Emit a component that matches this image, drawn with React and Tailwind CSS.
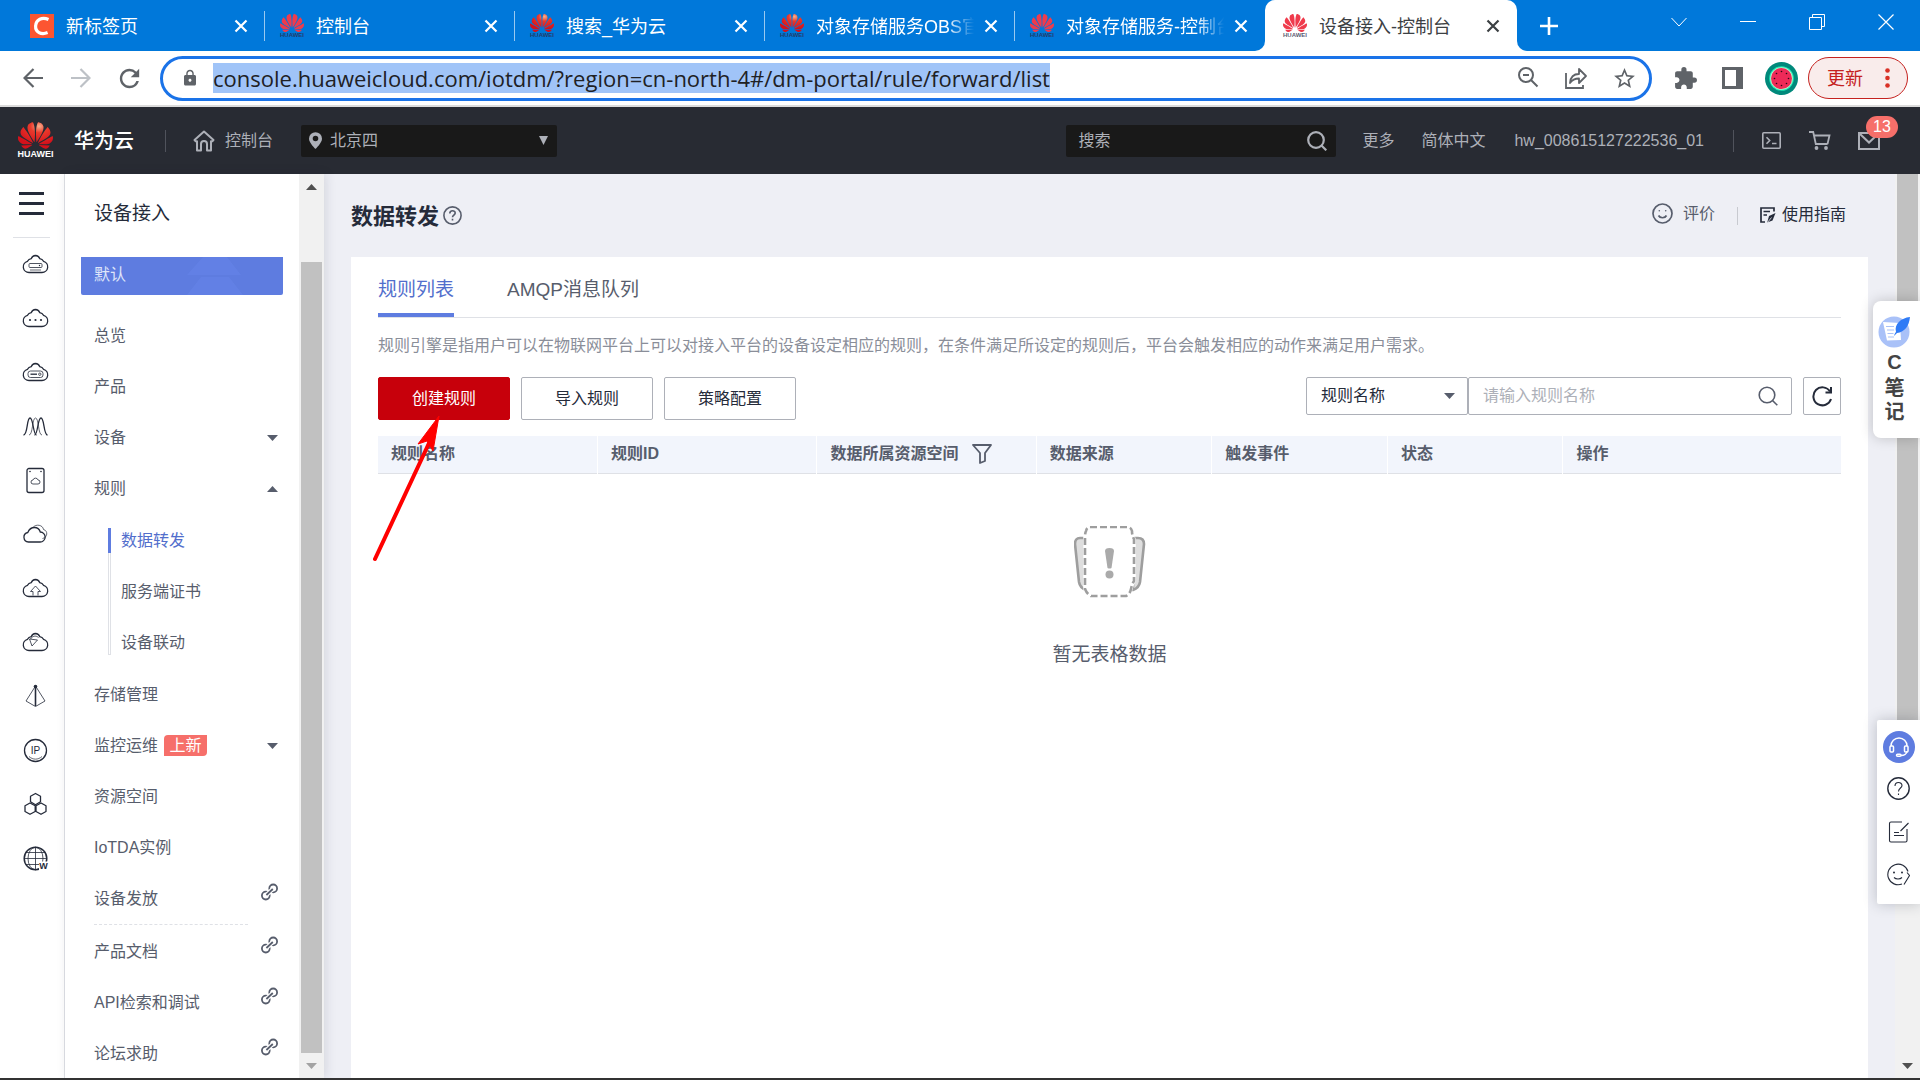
import { useState } from 'react';
import { SiHuawei } from 'react-icons/si';
import { MdExtension, MdStarBorder, MdLock, MdRefresh } from 'react-icons/md';

const browserTabs = [
  { title: '新标签页', icon: 'csdn' },
  { title: '控制台', icon: 'huawei' },
  { title: '搜索_华为云', icon: 'huawei-dark' },
  { title: '对象存储服务OBS官', icon: 'huawei-dark' },
  { title: '对象存储服务-控制台', icon: 'huawei' },
];

const menuTop = [
  { label: '总览' },
  { label: '产品' },
  { label: '设备', caret: 'down' },
  { label: '规则', caret: 'up' },
];

const ruleMenu = ['数据转发', '服务端证书', '设备联动'];

const menuBottom = [
  { label: '存储管理' },
  { label: '监控运维', caret: 'down', isNew: true },
  { label: '资源空间' },
  { label: 'IoTDA实例' },
  { label: '设备发放', external: true },
];

const menuLinks = [
  { label: '产品文档', external: true },
  { label: 'API检索和调试', external: true },
  { label: '论坛求助', external: true },
];

const columns = [
  { label: '规则名称', width: 'w-[15%]' },
  { label: '规则ID', width: 'w-[15%]' },
  { label: '数据所属资源空间', width: 'w-[15%]', filter: true },
  { label: '数据来源', width: 'w-[12%]' },
  { label: '触发事件', width: 'w-[12%]' },
  { label: '状态', width: 'w-[12%]' },
  { label: '操作', width: 'w-[19%]' },
];

/* ---------- small icons ---------- */

function Caret({ up = false, className = 'text-[#575d6c]' }) {
  return (
    <svg width="11" height="6" viewBox="0 0 11 6" className={className} fill="currentColor">
      {up ? <path d="M5.5 0L11 6H0z" /> : <path d="M0 0h11L5.5 6z" />}
    </svg>
  );
}

function CloseIcon() {
  return (
    <svg width="14" height="14" viewBox="0 0 14 14" fill="none" stroke="currentColor" strokeWidth="2.2">
      <path d="M1.5 1.5l11 11M12.5 1.5l-11 11" />
    </svg>
  );
}

function ChainIcon() {
  return (
    <svg width="18" height="18" viewBox="0 0 18 18" fill="none" stroke="#575d6c" strokeWidth="1.8">
      <circle cx="5.8" cy="12.6" r="3.9" />
      <circle cx="13.2" cy="5.4" r="3.9" />
      <path d="M6.4 12l6.4-6" stroke="#fff" strokeWidth="4.4" />
      <path d="M6.4 12l6.4-6" />
    </svg>
  );
}

function SearchIcon({ size = 20, width = 2 }) {
  return (
    <svg width={size} height={size} viewBox="0 0 20 20" fill="none" stroke="currentColor" strokeWidth={width}>
      <circle cx="9" cy="9" r="7.8" />
      <path d="M14.5 14.5l4.8 4.8" />
    </svg>
  );
}

function HuaweiMark({ dark = false }) {
  return (
    <span className="flex w-6 shrink-0 flex-col items-center">
      <SiHuawei
        viewBox="0 3 24 18"
        className="h-[18px] w-6"
        style={{ fill: dark ? 'url(#hw-petal)' : '#ef3b4c' }}
      />
      <span className="text-[6px] leading-[6px] font-bold text-[#2b2b4a]/80">HUAWEI</span>
    </span>
  );
}

function Favicon({ type }) {
  if (type === 'csdn') {
    return (
      <svg width="24" height="24" viewBox="0 0 24 24" className="shrink-0">
        <rect width="24" height="24" fill="#fc5531" />
        <path d="M18.5 5.5C12 2.6 6 5.5 5.6 12c-.3 6 5.4 9.2 12 6.6" fill="none" stroke="#fff" strokeWidth="3.2" />
      </svg>
    );
  }
  return <HuaweiMark dark={type === 'huawei-dark'} />;
}

/* ---------- browser frame ---------- */

function TabStrip() {
  return (
    <div className="flex h-[51px] shrink-0 bg-[#0078da] pl-[15px] text-lg text-white">
      {browserTabs.map((tab, i) => (
        <div key={tab.title} className="flex w-[250px] items-center pl-[15px]">
          <Favicon type={tab.icon} />
          <span
            className={`ml-3 flex-1 overflow-hidden pt-0.5 whitespace-nowrap ${
              i > 2 ? 'mask-r-from-80% mask-r-to-97%' : ''
            }`}
          >
            {tab.title}
          </span>
          <button aria-label="关闭标签页" className="ml-1 flex w-4 justify-center">
            <CloseIcon />
          </button>
          <span className={`ml-[15px] h-[30px] w-px ${i < 4 ? 'bg-white/60' : ''}`} />
        </div>
      ))}

      {/* Active tab, the two spans draw the outward curves at its foot */}
      <div className="relative flex w-[252px] items-center rounded-t-[10px] bg-white pl-[18px] text-[#3c4043]">
        <span className="absolute bottom-0 -left-2.5 h-2.5 w-2.5 bg-white">
          <span className="block h-full w-full rounded-br-[10px] bg-[#0078da]" />
        </span>
        <span className="absolute -right-2.5 bottom-0 h-2.5 w-2.5 bg-white">
          <span className="block h-full w-full rounded-bl-[10px] bg-[#0078da]" />
        </span>
        <HuaweiMark />
        <span className="ml-3 flex-1 pt-0.5 whitespace-nowrap">设备接入-控制台</span>
        <button aria-label="关闭标签页" className="mr-4 flex w-4 justify-center">
          <CloseIcon />
        </button>
      </div>

      <button aria-label="新建标签页" className="ml-5 flex w-6 items-center justify-center">
        <svg width="18" height="18" viewBox="0 0 18 18" stroke="currentColor" strokeWidth="2.6">
          <path d="M9 0v18M0 9h18" />
        </svg>
      </button>

      <div className="ml-auto flex h-[43px] items-center">
        <button aria-label="搜索标签页" className="flex w-[69px] justify-center">
          <svg width="16" height="10" viewBox="0 0 16 10" fill="none" stroke="currentColor">
            <path d="M.5 1L8 9l7.5-8" />
          </svg>
        </button>
        <button aria-label="最小化" className="flex w-[69px] justify-center">
          <span className="h-px w-4 bg-white" />
        </button>
        <button aria-label="还原" className="flex w-[69px] justify-center">
          <svg width="16" height="16" viewBox="0 0 16 16" fill="none" stroke="currentColor">
            <path d="M.5 3.5h12v12H.5zM3.5 3.5v-3h12v12h-3" />
          </svg>
        </button>
        <button aria-label="关闭" className="flex w-[69px] justify-center">
          <svg width="16" height="16" viewBox="0 0 16 16" fill="none" stroke="currentColor" strokeWidth="1.2">
            <path d="M.5.5l15 15M15.5.5l-15 15" />
          </svg>
        </button>
      </div>
    </div>
  );
}

function AddressRow() {
  return (
    <div className="flex h-14 shrink-0 items-center border-b-2 border-[#dcdcdc] bg-white pr-3 pl-[9px] text-[#5f6368]">
      <button aria-label="后退" className="flex w-12 justify-center">
        <svg width="20" height="20" viewBox="0 0 20 20" fill="none" stroke="currentColor" strokeWidth="2.2">
          <path d="M20 10H2M10.5 1l-9 9 9 9" />
        </svg>
      </button>
      <button aria-label="前进" className="flex w-12 justify-center text-[#bdc1c6]">
        <svg width="20" height="20" viewBox="0 0 20 20" fill="none" stroke="currentColor" strokeWidth="2.2">
          <path d="M0 10h18M9.5 1l9 9-9 9" />
        </svg>
      </button>
      <button aria-label="重新加载" className="flex w-12 justify-center">
        <MdRefresh size={29} />
      </button>

      <div className="ml-[7px] flex h-[45px] flex-1 items-center rounded-full border-3 border-[#1a73e8] pl-[18px]">
        <MdLock size={18} />
        <input
          aria-label="地址栏"
          className="ml-3.5 field-sizing-content h-[30px] bg-[#a0c4f8] font-['Open_Sans',sans-serif] text-[22px] text-[#202124] outline-none"
          defaultValue="console.huaweicloud.com/iotdm/?region=cn-north-4#/dm-portal/rule/forward/list"
        />
        <div className="mr-px ml-auto flex">
          <button aria-label="缩放" className="flex w-12 justify-center">
            <svg width="22" height="22" viewBox="0 0 22 22" fill="none" stroke="currentColor" strokeWidth="2">
              <circle cx="9" cy="9" r="7" />
              <path d="M14 14l6.5 6.5M6 9h6" />
            </svg>
          </button>
          <button aria-label="分享" className="flex w-12 justify-center">
            <svg width="24" height="24" viewBox="0 0 24 24" fill="none" stroke="currentColor" strokeWidth="1.8">
              <path d="M2 7v15h17v-3" />
              <path d="M6 17c.5-6 4-9 9-9V3l7 7-7 7v-4.5c-4 0-7 1.500-9 4.500z" strokeLinejoin="round" />
            </svg>
          </button>
          <button aria-label="收藏" className="flex w-12 justify-center">
            <MdStarBorder size={25} />
          </button>
        </div>
      </div>

      <button aria-label="扩展程序" className="ml-[9px] flex w-12 justify-center">
        <MdExtension size={25} />
      </button>
      <button aria-label="侧边栏" className="flex w-12 justify-center">
        <svg width="22" height="22" viewBox="0 0 22 22" fill="currentColor">
          <path d="M0 0h21v22H0zM3 3v16h11V3z" fillRule="evenodd" />
        </svg>
      </button>
      <button aria-label="个人资料" className="flex w-12 justify-center">
        <svg width="33" height="33" viewBox="0 0 33 33">
          <circle cx="16.5" cy="16.5" r="16.5" fill="#00897b" />
          <circle cx="16.5" cy="16.5" r="12.3" fill="#1de9b6" />
          <circle cx="16.5" cy="16.5" r="11.3" fill="#b9f6ca" />
          <circle cx="16.5" cy="16.5" r="10.5" fill="#ee2a58" />
          <g fill="#2b0a14">
            <circle cx="16.5" cy="9.5" r=".8" />
            <circle cx="16.5" cy="23.5" r=".8" />
            <circle cx="9.5" cy="16.5" r=".8" />
            <circle cx="23.5" cy="16.5" r=".8" />
            <circle cx="11.5" cy="11.5" r=".8" />
            <circle cx="21.5" cy="11.5" r=".8" />
            <circle cx="11.5" cy="21.5" r=".8" />
            <circle cx="21.5" cy="21.5" r=".8" />
          </g>
        </svg>
      </button>
      <button className="ml-[3px] flex h-[42px] w-[100px] items-center rounded-full border border-[#c5221f] bg-[#f9eceb] pl-[18px] text-lg text-[#c5221f]">
        <span className="pt-0.5">更新</span>
        <svg width="5" height="24" viewBox="0 0 5 24" fill="#d93025" className="ml-[22px]">
          <circle cx="2.5" cy="4.5" r="2.3" />
          <circle cx="2.5" cy="12" r="2.3" />
          <circle cx="2.5" cy="19.5" r="2.3" />
        </svg>
      </button>
    </div>
  );
}

/* ---------- console header ---------- */

function ConsoleHeader() {
  return (
    <header className="flex h-[67px] shrink-0 items-center bg-[#282b33] pr-10 pl-[18px] text-base text-[#adb0b8]">
      <a href="#home" className="flex items-center text-white">
        <span className="flex w-[35px] flex-col items-center">
          <SiHuawei viewBox="0 3 24 18" className="h-[27px] w-[35px]" style={{ fill: 'url(#hw-petal)' }} />
          <span className="mt-px text-[9px] leading-[9px] font-bold">HUAWEI</span>
        </span>
        <span className="ml-[21px] text-xl font-medium">华为云</span>
      </a>
      <span className="ml-[31px] h-[22px] w-px bg-[#50535c]" />
      <a href="#console" className="ml-[27px] flex items-center">
        <svg width="22" height="22" viewBox="0 0 22 22" fill="none" stroke="currentColor" strokeWidth="2" strokeLinejoin="round">
          <path d="M11 1.5L1.5 10l1.2 1.2H4v9.3h4V14a3 3 0 016 0v6.5h4v-9.3h1.3l1.2-1.2z" />
        </svg>
        <span className="ml-2.5">控制台</span>
      </a>
      <div className="relative ml-7 flex h-8 w-64 items-center rounded-xs bg-[#191919] pl-2">
        <svg width="13" height="17" viewBox="0 0 14 18" fill="currentColor">
          <path fillRule="evenodd" d="M7 0a7 7 0 00-7 7c0 4.500 7 11 7 11s7-6.500 7-11a7 7 0 00-7-7zm0 3.800a3 3 0 110 6 3 3 0 010-6z" />
        </svg>
        <select aria-label="区域" className="ml-2 flex-1 appearance-none bg-transparent outline-none">
          <option>北京四</option>
        </select>
        <svg width="9" height="9" viewBox="0 0 10 10" fill="currentColor" className="pointer-events-none absolute right-[9px]">
          <path d="M0 0h10L5 10z" />
        </svg>
      </div>

      <div className="ml-auto flex h-8 w-[270px] items-center rounded-xs bg-[#191919] pr-[9px] pl-3">
        <input aria-label="搜索" placeholder="搜索" className="min-w-0 flex-1 bg-transparent outline-none placeholder:text-[#adb0b8]" />
        <SearchIcon width={2.2} />
      </div>
      <a href="#more" className="ml-[26px]">更多</a>
      <a href="#lang" className="ml-[27px]">简体中文</a>
      <a href="#account" className="ml-[29px]">hw_008615127222536_01</a>
      <span className="ml-[29px] h-[22px] w-px bg-[#50535c]" />
      <button aria-label="CloudShell" className="ml-7">
        <svg width="19" height="17" viewBox="0 0 19 17" fill="none" stroke="currentColor" strokeWidth="1.6">
          <rect x=".8" y=".8" width="17.4" height="15.4" rx="1" />
          <path d="M4.5 5.2l3.2 3.3-3.2 3.3M10 11.5h4.5" />
        </svg>
      </button>
      <button aria-label="购物车" className="ml-7">
        <svg width="22" height="19" viewBox="0 0 22 19" fill="none" stroke="currentColor" strokeWidth="1.8">
          <path d="M0 1h4.2l2.6 12h11.700M5 4.500h15.500L18.500 13" />
          <circle cx="7.5" cy="17" r="1" fill="currentColor" />
          <circle cx="17" cy="17" r="1" fill="currentColor" />
        </svg>
      </button>
      <button aria-label="消息" className="relative ml-[27px]">
        <svg width="22" height="18" viewBox="0 0 22 18" fill="none" stroke="currentColor" strokeWidth="2">
          <path d="M1 1h20v16H1zM1.5 1.5l9.500 9 9.500-9" />
        </svg>
        <span className="absolute -top-4 left-2 h-[22px] w-8 rounded-full bg-[#f66f6a] text-center leading-[22px] text-white">
          13
        </span>
      </button>
    </header>
  );
}

/* ---------- left rail ---------- */

const cloud = 'M8 22.500a5.700 5.700 0 01-1.500-11.200 4.500 4.500 0 013.800-2.700A4.800 4.800 0 0114.500 5.500a4.800 4.800 0 014.200 3.100 4.500 4.500 0 013.800 2.700A5.700 5.700 0 0121 22.500z';

const railIcons = [
  <><path d={cloud} /><rect x="8" y="13.5" width="13" height="4" rx="1" strokeWidth=".8" /><path d="M9 20h11" strokeWidth=".7" /><circle cx="18.5" cy="15.5" r=".7" fill="currentColor" stroke="none" /></>,
  <><path d={cloud} /><g fill="currentColor" stroke="none"><circle cx="9" cy="16" r="1.1" /><circle cx="14.5" cy="16" r="1.1" /><circle cx="20" cy="16" r="1.1" /></g></>,
  <><path d={cloud} /><rect x="7" y="13" width="15" height="6.5" rx="2.5" strokeWidth=".8" /><path d="M9.5 16.2H16" /><circle cx="18.8" cy="16.2" r="1.2" strokeWidth=".8" /></>,
  <><path d="M2.5 23C7 23 5.500 6 9 6s3 17 6.500 17" /><path d="M8 23c4 0 3-17 6.500-17S17 23 21 23" strokeWidth=".7" /><path d="M13.500 23C17 23 16.500 6 20 6s2.500 17 6.500 17" /></>,
  <><rect x="6" y="2.5" width="17" height="24" rx="2" /><path d="M12 18a2 2 0 010-4 2.600 2.600 0 015 0 2 2 0 010 4z" strokeWidth=".8" /><g fill="currentColor" stroke="none"><circle cx="9" cy="5.5" r=".8" /><circle cx="20" cy="5.5" r=".8" /></g></>,
  <><path d="M7.500 22a4.800 4.800 0 01-.7-9.500C8 9.500 10 7.500 13.500 7.500s5 2 5.800 4.500A5 5 0 0119 22z" /><path d="M12 7.500C15 3.500 22 5 22.500 9.500c4.500 1 4.500 8-1 9" strokeWidth=".7" /></>,
  <><path d={cloud} /><path d="M12 21.500v-4H9.500l5-5.500 5 5.500H17v4" strokeWidth=".8" /></>,
  <><path d={cloud} /><path d="M8.500 11l8 1-5.500 6zM9.500 11c2-3 5-4 8-1.500" strokeWidth=".8" /></>,
  <><path d="M14.500 4L5 19l9.500 5.500L24 19z" strokeWidth=".8" /><path d="M14.500 4v20" strokeWidth="1.6" /><circle cx="14.5" cy="4.5" r="1.8" fill="currentColor" stroke="none" /></>,
  <><circle cx="14.5" cy="14.5" r="11" /><path d="M8 20.500c4 3.500 9 3.500 13 0" strokeWidth=".7" /><text x="14.5" y="18" fontSize="10" textAnchor="middle" fill="currentColor" stroke="none">IP</text></>,
  <><path d="M14.500 3.500l5 2.800v5.500l-5 2.900-5-2.900V6.300z" strokeLinejoin="round" /><path d="M9 13l5.200 2.800v5.700L9 24.300l-5-2.800v-5.700zM20 13l5 2.800v5.700l-5 2.800-5-2.800v-5.700z" strokeLinejoin="round" /></>,
  <><circle cx="14.5" cy="14.5" r="11.3" strokeWidth="1.5" /><path d="M14.500 3v23M3 14.500h23M5 8.500h19M5 20.500h13" strokeWidth=".8" /><ellipse cx="14.5" cy="14.5" rx="7.5" ry="11.3" strokeWidth=".8" /><rect x="18" y="17.5" width="10" height="9" fill="#fff" stroke="none" /><text x="22.5" y="25" fontSize="9" fontWeight="bold" textAnchor="middle" fill="currentColor" stroke="none">W</text></>,
];

function Rail() {
  return (
    <div className="flex w-[65px] shrink-0 flex-col border-r border-[#dfe1e6] bg-white">
      <button aria-label="服务列表" className="mt-[18px] ml-[19px] flex w-[25px] flex-col gap-[7px]">
        <span className="h-[3px] w-full bg-[#252b3a]" />
        <span className="h-[3px] w-full bg-[#252b3a]" />
        <span className="h-[3px] w-full bg-[#252b3a]" />
      </button>
      <span className="mt-[22px] ml-[13px] h-px w-[37px] bg-[#dfe1e6]" />
      <div className="flex flex-col pl-[7px]">
        {railIcons.map((shapes, i) => (
          <a key={i} href="#service" aria-label="服务" className="flex h-[54px] items-center justify-center pb-0.5 text-[#252b3a]">
            <svg width="29" height="29" viewBox="0 0 29 29" fill="none" stroke="currentColor" strokeWidth="1.3">
              {shapes}
            </svg>
          </a>
        ))}
      </div>
    </div>
  );
}

/* ---------- sidebar ---------- */

function MenuRow({ item }) {
  return (
    <a href="#menu" className="flex h-[51px] items-center pr-[21px] pl-[29px]">
      {item.label}
      {item.isNew && (
        <span className="ml-1.5 h-[21px] w-[43px] rounded-tl-sm rounded-br-sm bg-[#f66f6a] text-center leading-[21px] text-white">
          上新
        </span>
      )}
      {item.caret && (
        <span className="ml-auto">
          <Caret up={item.caret === 'up'} />
        </span>
      )}
      {item.external && (
        <span className="mb-3.5 ml-auto">
          <ChainIcon />
        </span>
      )}
    </a>
  );
}

function ScrollArrow({ up = false, className }) {
  return (
    <span className="flex h-[25px] w-full shrink-0 items-center justify-center">
      <Caret up={up} className={className} />
    </span>
  );
}

function Sidebar() {
  return (
    <aside className="flex w-[259px] shrink-0 bg-white shadow-[2px_0_10px_rgba(37,43,58,0.12)]">
      <nav className="flex-1 text-base text-[#575d6c]">
        <h2 className="flex h-[83px] items-center pb-0.5 pl-[29px] text-[19px] text-[#252b3a]">设备接入</h2>
        <div className="mx-4 flex h-[38px] items-center overflow-hidden rounded-b-xs bg-[#5e7ce0] text-[#dfe5f9]">
          <span className="w-[106px] pb-0.5 pl-[13px]">默认</span>
          <svg width="56" height="38" viewBox="0 0 56 38" fill="#6f8df0" opacity=".3">
            <path d="M16 0h24l14 18H0zM14 20h28l14 18H0z" />
            <path d="M28 1l12 17H16z" />
          </svg>
        </div>
        <div className="mt-[15px]">
          {menuTop.map((item) => (
            <MenuRow key={item.label} item={item} />
          ))}
          <div className="relative py-px">
            {/* Guide line next to the nested items */}
            <span className="absolute top-3.5 bottom-3.5 left-[43px] w-[3px] border border-[#dfe1e6]" />
            <span className="absolute top-3.5 left-[43px] h-[25px] w-[3px] bg-[#5e7ce0]" />
            {ruleMenu.map((label, i) => (
              <a
                key={label}
                href="#rule"
                className={`flex h-[51px] items-center pl-14 ${i === 0 ? 'text-[#526ecc]' : ''}`}
              >
                {label}
              </a>
            ))}
          </div>
          {menuBottom.map((item) => (
            <MenuRow key={item.label} item={item} />
          ))}
          <div className="mr-[51px] mb-px ml-[29px] border-t border-dashed border-[#dfe1e6]" />
          {menuLinks.map((item) => (
            <MenuRow key={item.label} item={item} />
          ))}
        </div>
      </nav>
      <div className="flex w-[25px] flex-col items-center bg-[#f1f1f1]">
        <ScrollArrow up className="text-[#505050]" />
        <span className="mt-[63px] w-[21px] flex-1 bg-[#c1c1c1]" />
        <ScrollArrow className="text-[#a3a3a3]" />
      </div>
    </aside>
  );
}

/* ---------- main content ---------- */

function EmptyIcon() {
  return (
    <svg width="72" height="72" viewBox="1 1 72 72" fill="none" stroke="#9e9e9e" strokeWidth="2.6">
      <path d="M12 13H7q-5 0-5 6l4 38q1 6 7 8zM60 13h5q6 0 6 6l-4 38q-1 6-7 8z" fill="#dedede" strokeLinejoin="round" />
      <path d="M17 2h37q4 0 5 4 0 5 2 8v42q-2 3-3 8-1 5-5 7H18q-4-2-6-7V12q0-4 1-6 1-4 4-4z" fill="#fff" stroke="#fff" strokeWidth="3.5" />
      <path d="M17 2h37q4 0 5 4 0 5 2 8v42q-2 3-3 8-1 5-5 7H18q-4-2-6-7V12q0-4 1-6 1-4 4-4z" fill="#fff" strokeDasharray="7 3" />
      <g fill="#aaa" stroke="none">
        <path d="M32 26q0-3 4.500-3t4.500 3l-2.500 17q-2 1-4 0z" />
        <circle cx="36.5" cy="49.5" r="4" />
      </g>
    </svg>
  );
}

function RuleTable() {
  return (
    <table className="mt-4 w-full table-fixed text-left text-base text-[#575d6c]">
      <thead>
        <tr className="h-[37px] border-b border-[#dfe1e6] bg-[#f2f5fc]">
          {columns.map((col) => (
            <th key={col.label} className={`border-r border-white pl-[13px] font-bold last:border-r-0 ${col.width}`}>
              <span className="flex items-center whitespace-nowrap">
                {col.label}
                {col.filter && (
                  <svg width="20" height="20" viewBox="0 0 20 20" fill="none" stroke="currentColor" strokeWidth="1.8" strokeLinejoin="round" className="ml-3.5">
                    <path d="M1 1h18l-6 8v8l-5 2V9z" />
                  </svg>
                )}
              </span>
            </th>
          ))}
        </tr>
      </thead>
      <tbody>
        <tr>
          <td colSpan={columns.length} className="pt-[52px]">
            <div className="flex flex-col items-center">
              <EmptyIcon />
              <p className="mt-[43px] text-[19px] leading-7">暂无表格数据</p>
            </div>
          </td>
        </tr>
      </tbody>
    </table>
  );
}

function Content() {
  const [activeTab, setActiveTab] = useState('list');
  const tabClass = 'h-full border-b-4 pt-2.5 text-[19px]';
  const buttonClass = 'h-[43px] w-[132px] rounded-xs border text-base';

  return (
    <main className="flex flex-1 flex-col px-[27px]">
      <div className="flex h-[83px] shrink-0 items-center pr-[22px]">
        <h1 className="pt-0.5 text-[22px] font-bold text-[#252b3a]">数据转发</h1>
        <button aria-label="帮助" className="ml-1">
          <svg width="19" height="19" viewBox="0 0 19 19" fill="none" stroke="#575d6c" strokeWidth="1.6">
            <circle cx="9.5" cy="9.5" r="8.6" />
            <path d="M6.800 7.500c0-3.800 5.600-3.500 5.400-.3-.2 1.800-2.700 2-2.700 4M9.500 12.800v1.800" />
          </svg>
        </button>
        <a href="#rate" className="ml-auto flex items-center pb-1 text-base text-[#575d6c]">
          <svg width="21" height="21" viewBox="0 0 21 21" fill="none" stroke="currentColor" strokeWidth="1.7">
            <circle cx="10.5" cy="10.5" r="9.5" />
            <path d="M6.500 12.500c1.500 3 6.500 3 8 0" />
            <circle cx="7.3" cy="7.8" r=".8" fill="currentColor" stroke="none" />
            <circle cx="13.7" cy="7.8" r=".8" fill="currentColor" stroke="none" />
          </svg>
          <span className="ml-2.5">评价</span>
        </a>
        <span className="ml-[22px] h-[18px] w-px bg-[#c8cad0]" />
        <a href="#guide" className="ml-[22px] flex items-center pb-0.5 text-base text-[#252b3a]">
          <svg width="16" height="16" viewBox="0 0 16 16" fill="none" stroke="currentColor" strokeWidth="1.7">
            <path d="M14 4.500V1H1v14h4M3.500 4.500H10M3.500 8h3.500" />
            <path d="M15.500 6L9 9l-1.800 6.500 5.300-2z" fill="currentColor" stroke="none" />
            <path d="M7.500 15.500l4-5" stroke="#eeeff5" strokeWidth=".8" />
          </svg>
          <span className="ml-1.5">使用指南</span>
        </a>
      </div>

      <section className="relative flex-1 bg-white px-[27px]">
        <div role="tablist" className="flex h-[61px] gap-[53px] border-b border-[#dfe1e6]">
          <button
            role="tab"
            aria-selected={activeTab === 'list'}
            onClick={() => setActiveTab('list')}
            className={`${tabClass} ${activeTab === 'list' ? 'border-[#5e7ce0] text-[#526ecc]' : 'border-transparent text-[#575d6c]'}`}
          >
            规则列表
          </button>
          <button
            role="tab"
            aria-selected={activeTab === 'amqp'}
            onClick={() => setActiveTab('amqp')}
            className={`${tabClass} ${activeTab === 'amqp' ? 'border-[#5e7ce0] text-[#526ecc]' : 'border-transparent text-[#575d6c]'}`}
          >
            AMQP消息队列
          </button>
        </div>

        <p className="mb-[3px] flex h-14 items-center text-base text-[#8a8e99]">
          规则引擎是指用户可以在物联网平台上可以对接入平台的设备设定相应的规则，在条件满足所设定的规则后，平台会触发相应的动作来满足用户需求。
        </p>

        <div className="flex items-start">
          <div className="flex gap-[11px]">
            <button className={`${buttonClass} border-[#c7000b] bg-[#c7000b] text-white`}>创建规则</button>
            <button className={`${buttonClass} border-[#adb0b8] text-[#252b3a]`}>导入规则</button>
            <button className={`${buttonClass} border-[#adb0b8] text-[#252b3a]`}>策略配置</button>
          </div>
          <div className="ml-auto flex text-base">
            <div className="relative flex h-[38px] w-[162px] items-center rounded-xs border border-[#adb0b8]">
              <select aria-label="搜索字段" className="h-full w-full appearance-none pl-3.5 text-[#252b3a] outline-none">
                <option>规则名称</option>
              </select>
              <span className="pointer-events-none absolute right-3 flex">
                <Caret />
              </span>
            </div>
            <div className="flex h-[38px] w-[324px] items-center rounded-xs border border-[#adb0b8] pr-[13px] pl-3.5 text-[#575d6c]">
              <input
                aria-label="规则名称"
                placeholder="请输入规则名称"
                className="min-w-0 flex-1 outline-none placeholder:text-[#adb0b8]"
              />
              <SearchIcon width={1.6} />
            </div>
            <button aria-label="刷新" className="ml-[11px] flex h-[38px] w-[38px] items-center justify-center rounded-xs border border-[#adb0b8]">
              <svg width="21" height="21" viewBox="0 0 21 21" fill="none" stroke="#252b3a" strokeWidth="2">
                <path d="M18 5.500A9 9 0 1019 13" />
                <path d="M19 1v5.500h-5.500" />
              </svg>
            </button>
          </div>
        </div>

        <RuleTable />

        {/* Red arrow pointing at the create button */}
        <svg width="76" height="156" viewBox="0 0 76 156" className="pointer-events-none absolute top-[153px] left-[19px]">
          <path d="M5 149L60 31" stroke="#f00" strokeWidth="4" strokeLinecap="round" />
          <path d="M69 6L48 34l9-3 6 10z" fill="#f00" stroke="#f00" strokeLinejoin="round" />
        </svg>
      </section>
    </main>
  );
}

/* ---------- floating widgets ---------- */

function NoteWidget() {
  return (
    <button className="absolute top-[301px] right-0 flex h-[137px] w-[47px] flex-col items-center rounded-l-lg bg-white pt-3.5 pr-1 text-xl leading-6 font-bold text-[#444] shadow-[0_0_14px_rgba(0,0,0,0.2)]">
      <svg width="33" height="33" viewBox="0 0 33 33" className="shrink-0">
        <circle cx="16" cy="17" r="15.5" fill="#a9c1f8" />
        <path d="M5 7l17 1 1 17-14 .5z" fill="#fff" />
        <path d="M8 11.500h8M9 15h7M9.500 18.500h6M10 22h6" stroke="#a9c1f8" strokeWidth="1.2" />
        <path d="M32 2c-9 1-16 7-14 15-1 1-1.500 2-2 4l3-3c8-1 12-7 13-16z" fill="#2f7bf6" />
      </svg>
      <span className="mt-0.5 mb-0.5">C</span>
      <span>笔</span>
      <span>记</span>
    </button>
  );
}

function HelpWidget() {
  return (
    <div className="absolute top-[720px] right-0 flex h-[184px] w-[43px] flex-col items-center rounded-l-xs bg-white pt-[11px] text-[#252b3a] shadow-[0_0_14px_rgba(37,43,58,0.25)]">
      <button aria-label="在线客服" className="flex h-8 w-8 items-center justify-center rounded-full bg-[#5e7ce0]">
        <svg width="20" height="20" viewBox="0 0 20 20" fill="none" stroke="#fff" strokeWidth="1.5">
          <path d="M2 9a8 8 0 0116 0M18 14c0 3-3 4.500-6 4.500" />
          <rect x="1" y="9" width="3.5" height="6" rx="1" />
          <rect x="15.5" y="9" width="3.5" height="6" rx="1" />
          <rect x="7.5" y="17.2" width="4.5" height="2" rx="1" />
        </svg>
      </button>
      <button aria-label="帮助" className="mt-3.5">
        <svg width="23" height="23" viewBox="0 0 23 23" fill="none" stroke="currentColor" strokeWidth="1.4">
          <circle cx="11.5" cy="11.5" r="10.7" />
          <path d="M8 9c0-4.800 7-4.500 7-.4 0 2.400-3.500 2.600-3.500 5.900M11.500 16.500V18" strokeWidth="1.1" />
        </svg>
      </button>
      <button aria-label="建议" className="mt-[21px]">
        <svg width="22" height="22" viewBox="0 0 22 22" fill="none" stroke="currentColor" strokeWidth="1.1">
          <path d="M14 1H3q-1.500 0-1.500 1.500v17Q1.500 21 3 21h14.500q1.500 0 1.500-1.500V8M20.500 2l-8 8M6 11.500h5M6 14.500h10" />
        </svg>
      </button>
      <button aria-label="满意度" className="mt-5">
        <svg width="23" height="23" viewBox="0 0 23 23" fill="none" stroke="currentColor" strokeWidth="1.1">
          <path d="M15 21a10.300 10.300 0 116-12.500M17 21.500l5.500-9-2.500-3" />
          <path d="M7 14.500c2 2 6 2 8 0" />
          <circle cx="7" cy="9.5" r="1" fill="currentColor" stroke="none" />
          <circle cx="15" cy="9.5" r="1" fill="currentColor" stroke="none" />
        </svg>
      </button>
    </div>
  );
}

function App() {
  return (
    <div className="relative flex h-screen flex-col overflow-hidden bg-[#eeeff5] font-['Liberation_Sans','Noto_Sans_CJK_SC',sans-serif]">
      {/* Shared gradient for the petal logo */}
      <svg width="0" height="0" className="absolute">
        <defs>
          <radialGradient id="hw-petal" cx="0.6" cy="0.15" r="0.7">
            <stop offset="0" stopColor="#f9b08c" />
            <stop offset="0.35" stopColor="#ea3a2c" />
            <stop offset="1" stopColor="#d4111b" />
          </radialGradient>
        </defs>
      </svg>

      <TabStrip />
      <AddressRow />
      <ConsoleHeader />

      <div className="flex min-h-0 flex-1">
        <Rail />
        <Sidebar />
        <Content />
        <div className="flex w-[25px] shrink-0 flex-col items-center bg-[#f1f1f1]">
          <span className="h-[546px] w-[21px] bg-[#c1c1c1]" />
          <span className="mt-auto">
            <ScrollArrow className="text-[#505050]" />
          </span>
        </div>
      </div>
      <div className="h-0.5 shrink-0 bg-[#333]" />

      <NoteWidget />
      <HelpWidget />
    </div>
  );
}

export default App;
